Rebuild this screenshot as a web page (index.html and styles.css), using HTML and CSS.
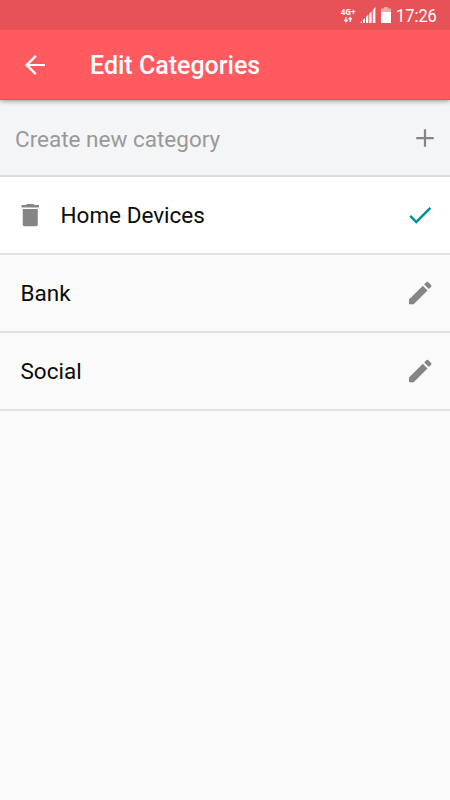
FILE: index.html
```
<!DOCTYPE html>
<html lang="en">
<head>
<meta charset="utf-8">
<title>Edit Categories</title>
<link rel="stylesheet" href="styles.css">
</head>
<body>
<div class="status">
  <div class="network"><span>4G+</span>
    <svg class="arrows" viewBox="0 0 10 6"><path d="M3 0v4M1.3 2.8l1.7 2 1.7-2M7.2 5V1M5.5 2.4L7.2.5l1.7 1.9" fill="none" stroke="#fff" stroke-width="1.2"/></svg>
  </div>
  <svg class="signal" viewBox="0 0 16 16"><path d="M0 16l2-2v2zM3 13l2-2v5H3zM6 10l2.3-2.3V16H6zM9.3 6.7l2.3-2.3V16H9.3zM12.8 3L15.4 0v16h-2.6z" fill="#fff"/></svg>
  <svg class="battery" viewBox="0 0 10 16"><path d="M3 0h4v1.5h3V5H0V1.5h3z" fill="#f3a9ac"/><path d="M0 5h10v11H0z" fill="#fff"/></svg>
  <span class="time">17:26</span>
</div>
<header class="toolbar">
  <svg class="icon" viewBox="0 0 24 24"><path d="M20 11.2H7.53l5.79-5.79L12 4l-8 8 8 8 1.31-1.41-5.78-5.79H20z"/></svg>
  <h1>Edit Categories</h1>
</header>
<main>
  <div class="row create">
    <span class="label">Create new category</span>
    <svg class="icon plus" viewBox="0 0 24 24"><path d="M19 12.9h-6.1V19h-1.8v-6.1H5v-1.8h6.1V5h1.8v6.1H19z"/></svg>
  </div>
  <div class="row editing">
    <svg class="icon trash" viewBox="0 0 24 24"><path d="M6.2 19.6c0 .8.6 1.4 1.4 1.4h9.2c.8 0 1.4-.6 1.4-1.4V7.2h-12zM19.2 4h-3.5l-1-.9h-5l-1 .9H5.2v1.9h14z"/></svg>
    <span class="label">Home Devices</span>
    <svg class="icon check" viewBox="0 0 24 24"><path d="M9 16.17L4.83 12l-1.42 1.41L9 19 21 7l-1.41-1.41z"/></svg>
  </div>
  <div class="row">
    <span class="label">Bank</span>
    <svg class="icon pencil" viewBox="0 0 24 24"><path d="M3.2 17.25V21h3.75L18.01 9.94l-3.75-3.75zM20.91 7.04a1 1 0 0 0 0-1.41l-2.34-2.34a1 1 0 0 0-1.41 0l-1.83 1.83 3.75 3.75z"/></svg>
  </div>
  <div class="row">
    <span class="label">Social</span>
    <svg class="icon pencil" viewBox="0 0 24 24"><path d="M3.2 17.25V21h3.75L18.01 9.94l-3.75-3.75zM20.91 7.04a1 1 0 0 0 0-1.41l-2.34-2.34a1 1 0 0 0-1.41 0l-1.83 1.83 3.75 3.75z"/></svg>
  </div>
</main>
</body>
</html>
```
FILE: styles.css
```
* { box-sizing: border-box; }
body {
  margin: 0;
  min-height: 800px;
  background: #fafafa;
  font-family: Roboto, sans-serif;
  color: #0a0a0a;
}
.status {
  height: 30px;
  background: #e75256;
  color: #fff;
  display: flex;
  align-items: center;
  justify-content: flex-end;
  padding: 0 13px 0 0;
  position: relative;
  z-index: 1;
}
.network {
  width: 16px;
  margin-right: 4px;
  display: flex;
  flex-direction: column;
  align-items: center;
  font: 700 8px/8px "Open Sans", sans-serif;
}
.arrows { width: 10px; height: 6px; margin-top: 1px; }
.signal { width: 16px; height: 16px; margin-right: 5px; }
.battery { width: 10px; height: 16px; margin-right: 6px; }
.time { font-size: 18px; line-height: 28px; transform: scaleX(.91); transform-origin: right; margin-left: -5px; padding-top: 1px; }
.toolbar {
  position: relative;
  height: 70px;
  background: #ff5a5f;
  border-bottom: 1px solid #ed4b50;
  box-shadow: 0 1px 5px rgba(0, 30, 30, .45);
  display: flex;
  align-items: center;
  padding: 1px 20px 0;
}
.icon { width: 30px; height: 30px; flex: none; fill: #858585; }
.toolbar .icon { fill: #fff; }
h1 {
  margin: 1px 0 0 40px;
  color: #fff;
  font-size: 25px;
  font-weight: 500;
  line-height: 30px;
}
.row {
  height: 78px;
  border-bottom: 2px solid #e1e1e1;
  display: flex;
  align-items: center;
  justify-content: space-between;
  padding: 0 15px 0 20.5px;
}
.label { font-size: 22.5px; line-height: 30px; }
.create {
  height: 77px;
  background: #f4f5f7;
  border-color: #dbdddf;
  padding: 1px 10px 0 15px;
}
.create .label { color: #999; padding-top: 2px; }
.editing { background: #fff; padding-left: 15px; }
.editing .label { flex: 1; margin-left: 15.5px; }
.editing .check { fill: #00919b; }
```
